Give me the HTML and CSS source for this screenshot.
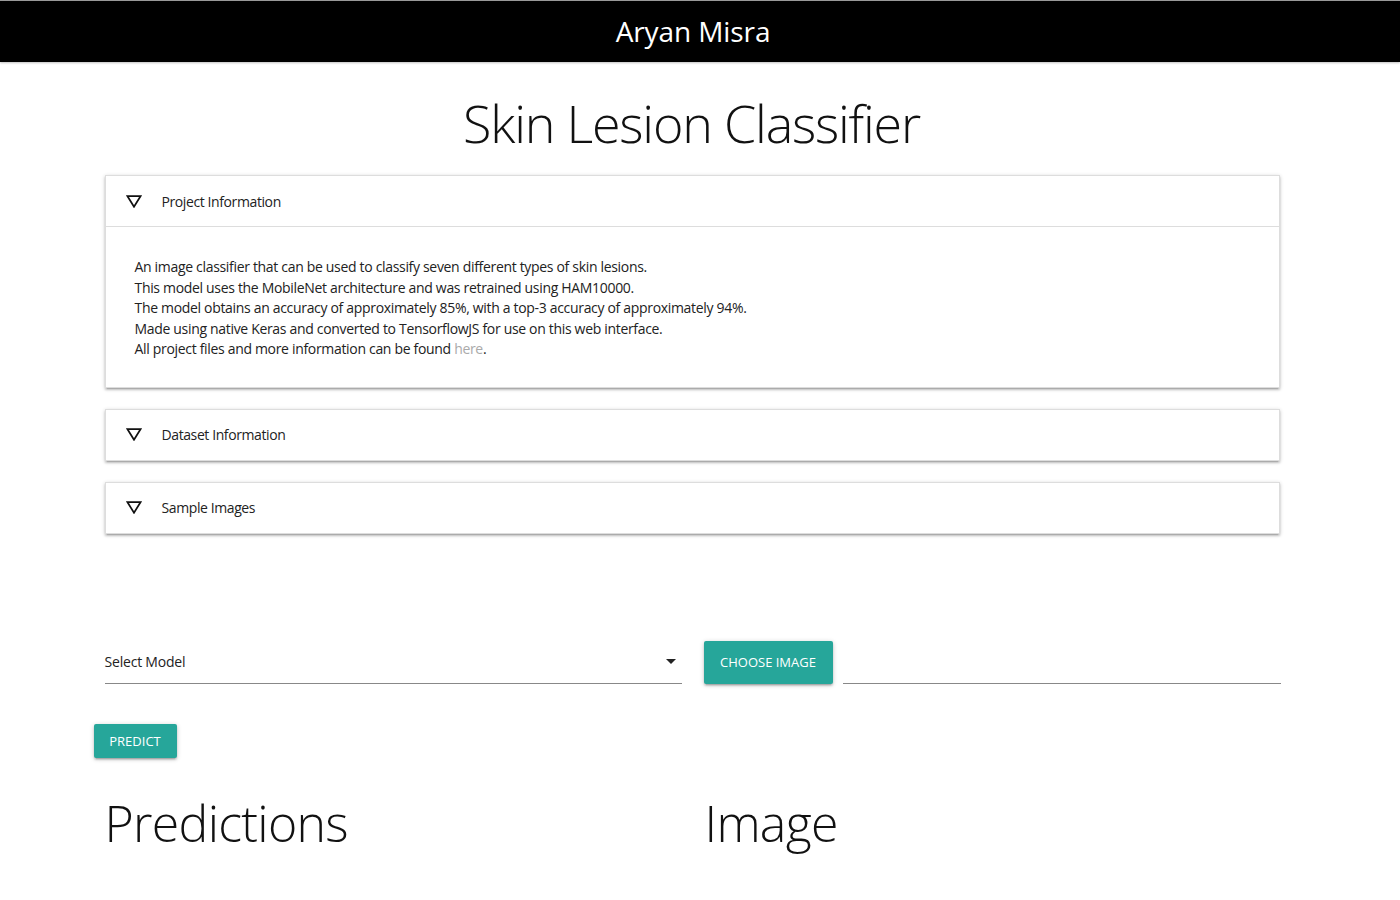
FILE: index.html
```html
<!DOCTYPE html>
<html lang="en">
<head>
<meta charset="utf-8">
<title>Skin Lesion Classifier</title>
<link rel="stylesheet" href="styles.css">
</head>
<body>
<header class="topbar">
  <div class="topbar-inner">Aryan Misra</div>
</header>
<main class="page">
  <div class="container">
    <h1 class="title">Skin Lesion Classifier</h1>

    <section class="card">
      <div class="card-header">
        <svg class="tri" viewBox="0 0 16 13" width="16" height="13"><path d="M1.5 1.2 H14.5 L8 11.8 Z" fill="none" stroke="#111" stroke-width="1.7" stroke-linejoin="miter"/></svg>
        <span>Project Information</span>
      </div>
      <div class="card-body">
        An image classifier that can be used to classify seven different types of skin lesions.<br>
        This model uses the MobileNet architecture and was retrained using HAM10000.<br>
        The model obtains an accuracy of approximately 85%, with a top-3 accuracy of approximately 94%.<br>
        Made using native Keras and converted to TensorflowJS for use on this web interface.<br>
        All project files and more information can be found <a class="link" href="#">here</a>.
      </div>
    </section>

    <section class="card">
      <div class="card-header">
        <svg class="tri" viewBox="0 0 16 13" width="16" height="13"><path d="M1.5 1.2 H14.5 L8 11.8 Z" fill="none" stroke="#111" stroke-width="1.7" stroke-linejoin="miter"/></svg>
        <span>Dataset Information</span>
      </div>
    </section>

    <section class="card">
      <div class="card-header">
        <svg class="tri" viewBox="0 0 16 13" width="16" height="13"><path d="M1.5 1.2 H14.5 L8 11.8 Z" fill="none" stroke="#111" stroke-width="1.7" stroke-linejoin="miter"/></svg>
        <span>Sample Images</span>
      </div>
    </section>

    <div class="controls">
      <div class="select">
        <span>Select Model</span>
        <svg class="caret" viewBox="0 0 10 5" width="10" height="5"><path d="M0 0 H10 L5 5 Z" fill="#222"/></svg>
      </div>
      <div class="file-field">
        <button class="btn btn-choose">CHOOSE IMAGE</button>
        <div class="file-path"></div>
      </div>
    </div>

    <div class="predict-row">
      <button class="btn btn-predict">PREDICT</button>
    </div>

    <div class="results">
      <h2 class="big col-left">Predictions</h2>
      <h2 class="big">Image</h2>
    </div>
  </div>
</main>
</body>
</html>
```

FILE: styles.css
```css
* { box-sizing: border-box; }
html, body { margin: 0; padding: 0; }
body {
  font-family: "Open Sans", "Noto Sans", sans-serif;
  color: #1a1a1a;
  background: #fff;
  width: 1400px;
}
.topbar {
  background: #000;
  height: 62px;
  box-shadow: 0 1px 2px rgba(0,0,0,0.25);
  border-top: 1px solid #999;
}
.topbar-inner {
  width: 1386px;
  text-align: center;
  color: #fff;
  font-size: 28px;
  line-height: 60px;
  letter-spacing: -0.1px;
  font-weight: 400;
}
.page { width: 1383px; }
.container {
  width: 1176px;
  margin: 0 auto;
}
.title {
  margin: 28px 0 19px;
  text-align: center;
  font-weight: 300;
  font-size: 52px;
  line-height: 66px;
  letter-spacing: -1.2px;
  color: #111;
}
.card {
  background: #fff;
  border: 1px solid #ddd;
  box-shadow: 0 2px 2px 0 rgba(0,0,0,0.14), 0 3px 1px -2px rgba(0,0,0,0.12), 0 1px 4px 0 rgba(0,0,0,0.2);
  margin: 0 0 21px 1px;
}
.card-header {
  display: flex;
  align-items: center;
  height: 50px;
  padding: 0 20px;
  font-size: 14px;
  color: #222;
  letter-spacing: -0.4px;
}
.tri { margin-right: 20px; flex: none; }
.card-body {
  border-top: 1px solid #ddd;
  padding: 30px 29px 27px;
  font-size: 14px;
  line-height: 20.5px;
  color: #222;
  letter-spacing: -0.32px;
}
.link { color: #aaa; text-decoration: none; }
.controls {
  display: flex;
  gap: 22px;
  margin-top: 107px;
  align-items: flex-end;
}
.select {
  width: 577px;
  margin-left: 1px;
  height: 43px;
  border-bottom: 1px solid #888;
  display: flex;
  align-items: center;
  justify-content: space-between;
  padding-right: 6px;
  font-size: 14px;
  color: #222;
  letter-spacing: -0.2px;
}
.file-field {
  flex: 1;
  display: flex;
  align-items: flex-end;
  gap: 10px;
}
.file-path {
  flex: 1;
  border-bottom: 1px solid #888;
  height: 1px;
  margin-right: -1px;
}
.btn {
  background: #26a69a;
  color: #fff;
  border: none;
  border-radius: 2px;
  font-family: "Open Sans", "Noto Sans", sans-serif;
  font-size: 13px;
  letter-spacing: 0;
  box-shadow: 0 2px 2px 0 rgba(0,0,0,0.14), 0 3px 1px -2px rgba(0,0,0,0.12), 0 1px 5px 0 rgba(0,0,0,0.2);
  padding: 0;
  cursor: pointer;
}
.btn-choose { width: 129px; height: 43px; }
.predict-row { margin: 40px 0 0 -10px; }
.btn-predict { width: 83px; height: 34px; }
.results {
  display: flex;
  margin-top: 20px;
}
.big {
  margin: 0;
  font-weight: 300;
  font-size: 50px;
  line-height: 90px;
  letter-spacing: -0.7px;
  color: #111;
  padding-left: 1px;
}
.col-left { width: 600px; }
```
